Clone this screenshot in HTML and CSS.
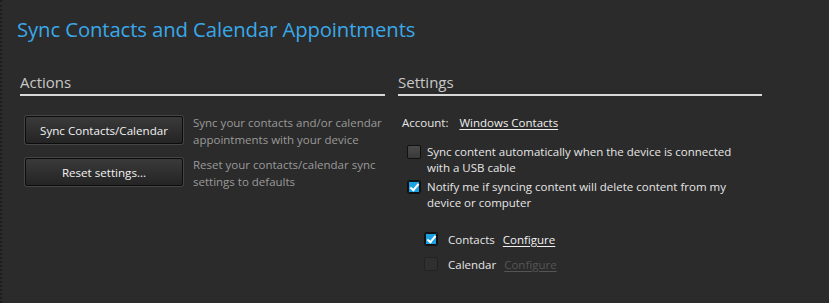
FILE: index.html
```html
<!DOCTYPE html>
<html lang="en">
<head>
    <meta charset="UTF-8">
    <title>Sync Contacts and Calendar Appointments</title>
    <link rel="stylesheet" href="styles.css">
</head>
<body>
    <div class="page">
        <h1 class="title">Sync Contacts and Calendar Appointments</h1>

        <div class="columns">
            <div class="col col-actions">
                <h2 class="section-head">Actions</h2>
                <div class="action-row">
                    <button class="btn">Sync Contacts/Calendar</button>
                    <p class="desc">Sync your contacts and/or calendar appointments with your device</p>
                </div>
                <div class="action-row">
                    <button class="btn">Reset settings...</button>
                    <p class="desc">Reset your contacts/calendar sync settings to defaults</p>
                </div>
            </div>

            <div class="col col-settings">
                <h2 class="section-head">Settings</h2>
                <div class="account">
                    <span class="account-label">Account:</span>
                    <a class="link" href="#">Windows Contacts</a>
                </div>
                <label class="check-row">
                    <span class="box"></span>
                    <span class="check-text">Sync content automatically when the device is connected with a USB cable</span>
                </label>
                <label class="check-row">
                    <span class="box checked"></span>
                    <span class="check-text">Notify me if syncing content will delete content from my device or computer</span>
                </label>

                <div class="sub-list">
                    <div class="sub-row">
                        <span class="box checked"></span>
                        <span class="sub-label">Contacts</span>
                        <a class="link" href="#">Configure</a>
                    </div>
                    <div class="sub-row">
                        <span class="box disabled"></span>
                        <span class="sub-label">Calendar</span>
                        <a class="link link-disabled" href="#">Configure</a>
                    </div>
                </div>
            </div>
        </div>
    </div>
</body>
</html>
```

FILE: styles.css
```css
html, body { margin: 0; padding: 0; }
body { background: #2b2b2b; font-family: "Open Sans", "Noto Sans", sans-serif; color: #e6e6e6; width: 829px; height: 303px; overflow: hidden; }
.page { height: 303px; border-left: 2px dotted #1c1c1c; box-sizing: border-box; padding: 12px 0 0 15px; }
.title { margin: 0; font-size: 20.3px; font-weight: 400; color: #3aa8e8; letter-spacing: -0.1px; line-height: 34px; }
.columns { display: flex; margin-top: 26px; }
.col-actions { width: 365px; margin-left: 3px; margin-right: 13px; }
.col-settings { width: 364px; }
.section-head { margin: 0; font-size: 15px; font-weight: 400; color: #c8c8c8; line-height: 20px; padding-bottom: 2px; border-bottom: 2px solid #d8d8d8; }
.action-row { display: flex; align-items: flex-start; margin-top: 20px; }
.action-row + .action-row { margin-top: 10px; }
.btn { width: 158px; height: 28px; margin-left: 5px; flex-shrink: 0; font-family: inherit; font-size: 11.6px; color: #f2f2f2; background: linear-gradient(#3a3a3a, #242424); border: 1px solid #0c0c0c; border-radius: 2px; box-shadow: 0 0 0 1px #454545; }
.desc { margin: -2px 0 0 10px; font-size: 11.5px; line-height: 17px; color: #9a9a9a; width: 190px; }
.account { margin: 19px 0 0 4px; font-size: 11.5px; }
.account-label { margin-right: 8px; }
.link { color: #f0f0f0; text-decoration: underline; text-underline-offset: 2px; }
.check-row { display: flex; align-items: flex-start; margin: 14px 0 0 9px; width: 340px; }
.check-row + .check-row { margin-top: 3px; }
.check-text { font-size: 11.5px; line-height: 16px; margin-left: 6px; }
.box { flex-shrink: 0; width: 12px; height: 12px; margin-top: 1px; border: 1px solid #111; background: linear-gradient(#4a4a4a, #3a3a3a); border-radius: 2px; position: relative; }
.box.checked { background: #1ba1e2; box-shadow: inset 0 0 0 1px #111; }
.box.checked::after { content: ""; position: absolute; left: 4px; top: 1px; width: 3px; height: 7px; border: solid #fff; border-width: 0 2px 2px 0; transform: rotate(40deg); }
.box.disabled { background: #2f2f2f; border-color: #222; }
.sub-list { margin: 19px 0 0 26px; }
.sub-row { display: flex; align-items: center; font-size: 11.5px; height: 18px; }
.sub-row + .sub-row { margin-top: 7px; }
.sub-row .box { margin-top: 0; }
.sub-label { margin: 0 8px 0 10px; }
.link-disabled { color: #555; }
```
